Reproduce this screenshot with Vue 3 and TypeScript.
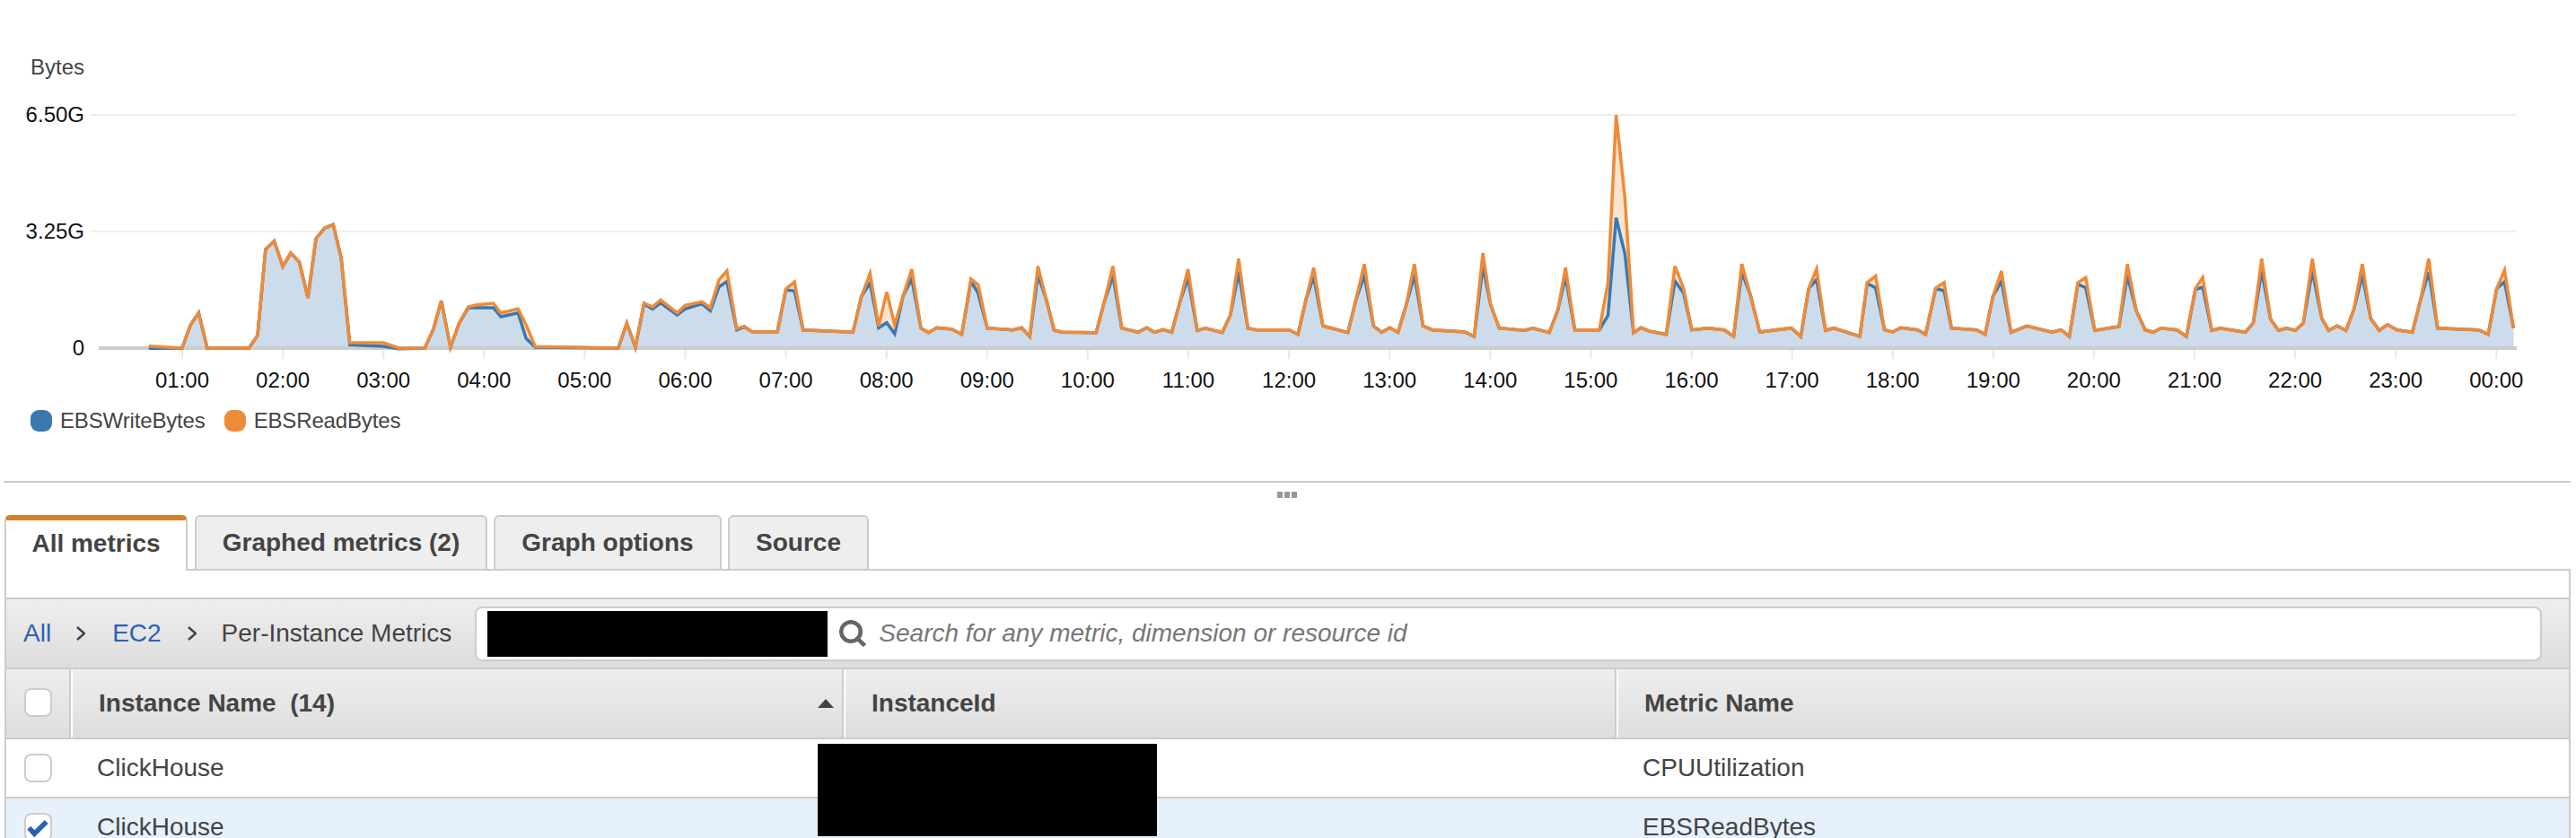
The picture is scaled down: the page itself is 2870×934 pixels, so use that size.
<script setup lang="ts">
type Row = [number, number, number?]

interface Point {
  x: number
  read: number
  write: number
}

const BASE_Y = 388
const HOUR_PX = 112.1

// samples traced from the chart: x, read y, write y (write defaults to read)
function segment(x0: number, kx: number, base: number, rows: Row[]): Point[] {
  return rows.map(([x, read, write]) => ({
    x: x0 + x / kx,
    read: BASE_Y - (base - read) / 3,
    write: BASE_Y - (base - (write ?? read)) / 3,
  }))
}

const points: Point[] = [
  ...segment(0, 1.568, 1043, [
    [260, 1036, 1044], [318, 1043], [333, 965], [347, 925], [362, 1043], [435, 1043], [450, 1000],
    [464, 712], [479, 685], [494, 770], [508, 725], [523, 755], [538, 875], [552, 677], [567, 642],
    [582, 630], [596, 740], [611, 1025, 1032], [670, 1025, 1037], [697, 1043, 1045], [742, 1043],
    [757, 980], [771, 885], [787, 1040], [802, 960], [818, 905, 908], [833, 898, 908], [862, 893, 908],
    [875, 925, 938], [905, 912, 925], [919, 965, 1010], [935, 1038, 1040], [1080, 1043], [1095, 960],
    [1110, 1040], [1125, 892, 895], [1140, 905, 912], [1154, 882, 892], [1183, 925, 932], [1197, 900, 912],
    [1226, 888, 895], [1241, 908, 918], [1256, 815, 838], [1270, 785, 820], [1287, 978, 982], [1300, 970, 972],
    [1314, 988], [1358, 988], [1373, 845, 848], [1388, 822, 852], [1403, 982], [1490, 990], [1505, 870],
    [1520, 793, 825], [1535, 970, 975], [1549, 855, 958], [1563, 965, 995],
  ]),
  ...segment(1000, 1.65, 864, [
    [10, 690], [26, 600, 632], [43, 797], [57, 812], [72, 796], [100, 801], [118, 818], [135, 633, 640],
    [148, 652, 680], [165, 797], [212, 803], [228, 796], [243, 825], [258, 590, 620], [273, 700], [288, 805],
    [303, 811], [365, 812], [380, 710], [396, 590, 622], [412, 797], [442, 811], [458, 796], [472, 811],
    [488, 802], [504, 811], [519, 710], [534, 600, 630], [551, 805], [566, 797], [597, 812], [612, 752],
    [627, 565, 610], [644, 797], [660, 803], [720, 803], [736, 818], [751, 700], [765, 595, 625], [782, 790],
    [828, 812], [843, 700], [858, 583, 622], [875, 790], [890, 811], [905, 796], [920, 811], [935, 720],
    [950, 583, 620], [966, 790], [983, 803], [1043, 810], [1060, 825], [1076, 546, 590], [1090, 718], [1106, 797],
    [1152, 805], [1168, 797], [1198, 812], [1214, 735], [1228, 595, 625], [1245, 803], [1290, 803],
    [1306, 645, 755], [1321, 85, 428], [1337, 360, 548], [1353, 812], [1367, 796], [1383, 808], [1413, 818],
    [1429, 590, 640], [1445, 665, 680], [1460, 803], [1490, 797], [1520, 803], [1537, 825], [1552, 583, 610],
  ]),
  ...segment(1950, 1.704, 864, [
    [0, 685], [18, 810], [78, 797], [96, 825], [111, 665], [126, 600, 635], [143, 805], [158, 797], [208, 825],
    [222, 645, 648], [238, 623, 662], [255, 803], [270, 810], [286, 796], [318, 803], [333, 818], [352, 663, 665],
    [368, 645, 672], [382, 797], [430, 803], [446, 818], [461, 690], [477, 606, 640], [495, 811], [525, 790],
    [573, 811], [590, 803], [606, 825], [622, 645, 650], [637, 628, 662], [654, 805], [700, 792], [716, 583, 622],
    [733, 740], [750, 803], [765, 811], [780, 797], [810, 803], [828, 825], [845, 665, 668], [859, 628, 660],
    [876, 805], [892, 797], [940, 811], [955, 780], [971, 565, 605], [988, 768], [1003, 805], [1018, 797],
    [1035, 805], [1050, 780], [1067, 565, 605], [1085, 765], [1098, 805], [1114, 790], [1131, 805], [1146, 735],
    [1162, 583, 620], [1178, 765], [1194, 805], [1210, 785], [1228, 803], [1257, 811], [1273, 700], [1288, 565, 610],
    [1305, 797], [1383, 803], [1401, 818], [1417, 665], [1432, 603, 642], [1449, 797],
  ]),
]

const toLine = (key: 'read' | 'write') =>
  points.map((p) => `${p.x.toFixed(1)},${p[key].toFixed(1)}`).join(' ')

const readLine = toLine('read')
const writeLine = toLine('write')
const firstX = points[0].x.toFixed(1)
const lastX = points[points.length - 1].x.toFixed(1)
const readArea = `${firstX},${BASE_Y} ${readLine} ${lastX},${BASE_Y}`
const writeArea = `${firstX},${BASE_Y} ${writeLine} ${lastX},${BASE_Y}`

const ticks = Array.from({ length: 24 }, (_, i) => ({
  x: 203 + i * HOUR_PX,
  label: `${String((i + 1) % 24).padStart(2, '0')}:00`,
}))

const tabs = ['All metrics', 'Graphed metrics (2)', 'Graph options', 'Source']
</script>

<template>
  <div class="page">
    <svg class="chart" width="2870" height="440" viewBox="0 0 2870 440">
      <text x="94" y="83" text-anchor="end" class="y-title">Bytes</text>
      <text x="94" y="136" text-anchor="end" class="y-label">6.50G</text>
      <text x="94" y="266" text-anchor="end" class="y-label">3.25G</text>
      <text x="94" y="396" text-anchor="end" class="y-label">0</text>
      <line x1="101" x2="2804" y1="128" y2="128" class="grid" />
      <line x1="101" x2="2804" y1="258" y2="258" class="grid" />
      <polygon :points="readArea" class="area-read" />
      <polygon :points="writeArea" class="area-write" />
      <line x1="110" x2="2804" y1="388" y2="388" class="axis" />
      <g v-for="tick in ticks" :key="tick.label">
        <line :x1="tick.x" :x2="tick.x" y1="390" y2="400" class="tick" />
        <text :x="tick.x" y="432" text-anchor="middle" class="x-label">{{ tick.label }}</text>
      </g>
      <polyline :points="writeLine" class="line-write" />
      <polyline :points="readLine" class="line-read" />
    </svg>

    <div class="legend">
      <span class="legend-item"><i class="swatch swatch--write"></i>EBSWriteBytes</span>
      <span class="legend-item"><i class="swatch swatch--read"></i>EBSReadBytes</span>
    </div>

    <div class="divider">
      <span class="grip"><i></i><i></i><i></i></span>
    </div>

    <div class="tabs">
      <div
        v-for="(tab, i) in tabs"
        :key="tab"
        :class="['tab', `tab--${i}`, { 'tab--active': i === 0 }]"
      >
        {{ tab }}
      </div>
    </div>

    <div class="panel">
      <div class="toolbar">
        <a class="crumb-link crumb-all">All</a>
        <svg class="chevron" width="10" height="16" viewBox="0 0 10 16"><path d="M1 1l8 7-8 7" /></svg>
        <a class="crumb-link crumb-ec2">EC2</a>
        <svg class="chevron" width="10" height="16" viewBox="0 0 10 16"><path d="M1 1l8 7-8 7" /></svg>
        <span class="crumb-current">Per-Instance Metrics</span>
        <div class="search">
          <span class="redact"></span>
          <svg class="search-icon" width="30" height="30" viewBox="0 0 30 30">
            <circle cx="13" cy="13" r="10.8" />
            <path d="M20.5 21l8 7.5" />
          </svg>
          <span class="placeholder">Search for any metric, dimension or resource id</span>
        </div>
      </div>

      <div class="table-row table-head">
        <div class="cell-check"><span class="checkbox"></span></div>
        <div class="cell cell-name">
          <span>Instance Name&nbsp; (14)</span>
          <i class="sort"></i>
        </div>
        <div class="cell cell-id">InstanceId</div>
        <div class="cell cell-metric">Metric Name</div>
      </div>

      <div class="table-row table-body">
        <div class="cell-check"><span class="checkbox"></span></div>
        <div class="cell cell-name">ClickHouse</div>
        <div class="cell cell-id"></div>
        <div class="cell cell-metric">CPUUtilization</div>
      </div>

      <div class="table-row table-body table-body--selected">
        <div class="cell-check">
          <span class="checkbox">
            <svg width="27" height="27" viewBox="0 0 27 27"><path d="M3.3 13.7l6 6.6L22.7 7" /></svg>
          </span>
        </div>
        <div class="cell cell-name">ClickHouse</div>
        <div class="cell cell-id"></div>
        <div class="cell cell-metric">EBSReadBytes</div>
      </div>

      <span class="redact-cell"></span>
    </div>
  </div>
</template>

<style>
html,
body {
  margin: 0;
  background: #fff;
  overflow: hidden;
}
</style>

<style scoped>
.page {
  width: 2870px;
  height: 934px;
  overflow: hidden;
  font-family: "Liberation Sans", Arial, sans-serif;
  color: #444;
}

.chart {
  display: block;
}

.y-title {
  font-size: 24px;
  fill: #444;
}

.y-label,
.x-label {
  font-size: 24px;
  fill: #111;
}

.grid {
  stroke: #eee;
  stroke-width: 2;
}

.axis {
  stroke: #ccc;
  stroke-width: 4;
}

.tick {
  stroke: #e8e8e8;
  stroke-width: 2;
}

.area-read {
  fill: #fbe3cf;
}

.area-write {
  fill: #ccdcea;
}

.line-read,
.line-write {
  fill: none;
  stroke-width: 3.5;
  stroke-linejoin: miter;
}

.line-read {
  stroke: #ef8a38;
}

.line-write {
  stroke: #3a78b2;
}

.legend {
  display: flex;
  gap: 21px;
  height: 96px;
  padding: 17px 0 0 34px;
  box-sizing: border-box;
  font-size: 24px;
  letter-spacing: -0.15px;
}

.legend-item {
  display: flex;
  align-items: center;
  gap: 9px;
  height: 24px;
}

.swatch {
  width: 24px;
  height: 24px;
  border-radius: 9px;
}

.swatch--write {
  background: #3a78b2;
}

.swatch--read {
  background: #ef8a38;
}

.divider {
  position: relative;
  width: 2860px;
  height: 38px;
  margin-left: 4px;
  border-top: 2px solid #ccc;
  box-sizing: border-box;
}

.grip {
  position: absolute;
  left: 1419px;
  top: 10px;
  display: flex;
  gap: 2px;
}

.grip i {
  width: 6px;
  height: 7px;
  background: #999;
}

.tabs {
  display: flex;
  align-items: flex-end;
  width: 2859px;
  height: 62px;
  margin-left: 5px;
  box-sizing: border-box;
  border-bottom: 2px solid #ccc;
}

.tab {
  height: 60px;
  display: flex;
  align-items: center;
  justify-content: center;
  box-sizing: border-box;
  background: #eee;
  border: 2px solid #ccc;
  border-bottom: none;
  border-radius: 6px 6px 0 0;
  font-size: 28px;
  font-weight: 700;
}

.tab--0 {
  width: 204px;
  margin-right: 8px;
}

.tab--1 {
  width: 326px;
  margin-right: 7px;
}

.tab--2 {
  width: 254px;
  margin-right: 7px;
}

.tab--3 {
  width: 157px;
}

.tab--active {
  height: 62px;
  margin-bottom: -2px;
  padding-bottom: 4px;
  background: #fff;
  border-top: 6px solid #d57f30;
  position: relative;
  z-index: 1;
}

.panel {
  position: relative;
  width: 2859px;
  margin-left: 5px;
  padding-top: 30px;
  box-sizing: border-box;
  border-left: 2px solid #ccc;
  border-right: 2px solid #ccc;
}

.toolbar {
  display: flex;
  align-items: center;
  height: 80px;
  padding-left: 19px;
  box-sizing: border-box;
  border-top: 2px solid #ccc;
  border-bottom: 2px solid #ccc;
  background: linear-gradient(#eee, #ddd);
  font-size: 28px;
}

.crumb-link {
  color: #2a62b5;
}

.crumb-all {
  margin-right: 28px;
}

.crumb-ec2 {
  margin: 0 29px 0 30px;
}

.crumb-current {
  margin-left: 28px;
  white-space: nowrap;
}

.chevron {
  flex: none;
}

.chevron path {
  fill: none;
  stroke: #444;
  stroke-width: 2.5;
}

.search {
  display: flex;
  align-items: center;
  height: 61px;
  width: 2303px;
  margin-left: 26px;
  padding-left: 12px;
  box-sizing: border-box;
  background: #fff;
  border: 2px solid #ccc;
  border-radius: 8px;
}

.redact {
  width: 379px;
  height: 51px;
  flex: none;
  background: #000;
}

.search-icon {
  margin-left: 13px;
  flex: none;
}

.search-icon circle,
.search-icon path {
  fill: none;
  stroke: #666;
  stroke-width: 4.5;
}

.placeholder {
  margin-left: 14px;
  font-size: 28px;
  font-style: italic;
  color: #777;
  white-space: nowrap;
}

.table-row {
  display: grid;
  grid-template-columns: 70px 861px 861px 1fr;
}

.table-head {
  height: 78px;
  border-bottom: 2px solid #ccc;
  box-sizing: border-box;
  background: linear-gradient(#eee, #ddd);
  font-size: 28px;
  font-weight: 700;
}

.table-head .cell {
  border-left: 2px solid #ccc;
  box-shadow: inset 2px 0 0 #fff;
  padding-left: 31px;
}

.table-head .cell-name {
  justify-content: space-between;
  padding-right: 9px;
}

.table-head .checkbox {
  margin-bottom: 3px;
}

.table-body {
  height: 66px;
  border-bottom: 2px solid #ccc;
  box-sizing: border-box;
  font-size: 28px;
}

.table-body .cell {
  padding-left: 31px;
}

.table-body--selected {
  background: #e6f1fc;
}

.cell,
.cell-check {
  display: flex;
  align-items: center;
  white-space: nowrap;
  box-sizing: border-box;
}

.cell-check {
  padding-left: 20px;
}

.checkbox {
  display: flex;
  align-items: center;
  justify-content: center;
  width: 31px;
  height: 32px;
  box-sizing: border-box;
  background: #fff;
  border: 2px solid #ccc;
  border-radius: 8px;
}

.checkbox path {
  fill: none;
  stroke: #2a62b5;
  stroke-width: 5.5;
}

.sort {
  width: 0;
  height: 0;
  border-left: 9px solid transparent;
  border-right: 9px solid transparent;
  border-bottom: 10px solid #444;
}

.redact-cell {
  position: absolute;
  left: 904px;
  top: 193px;
  width: 378px;
  height: 103px;
  background: #000;
}
</style>
